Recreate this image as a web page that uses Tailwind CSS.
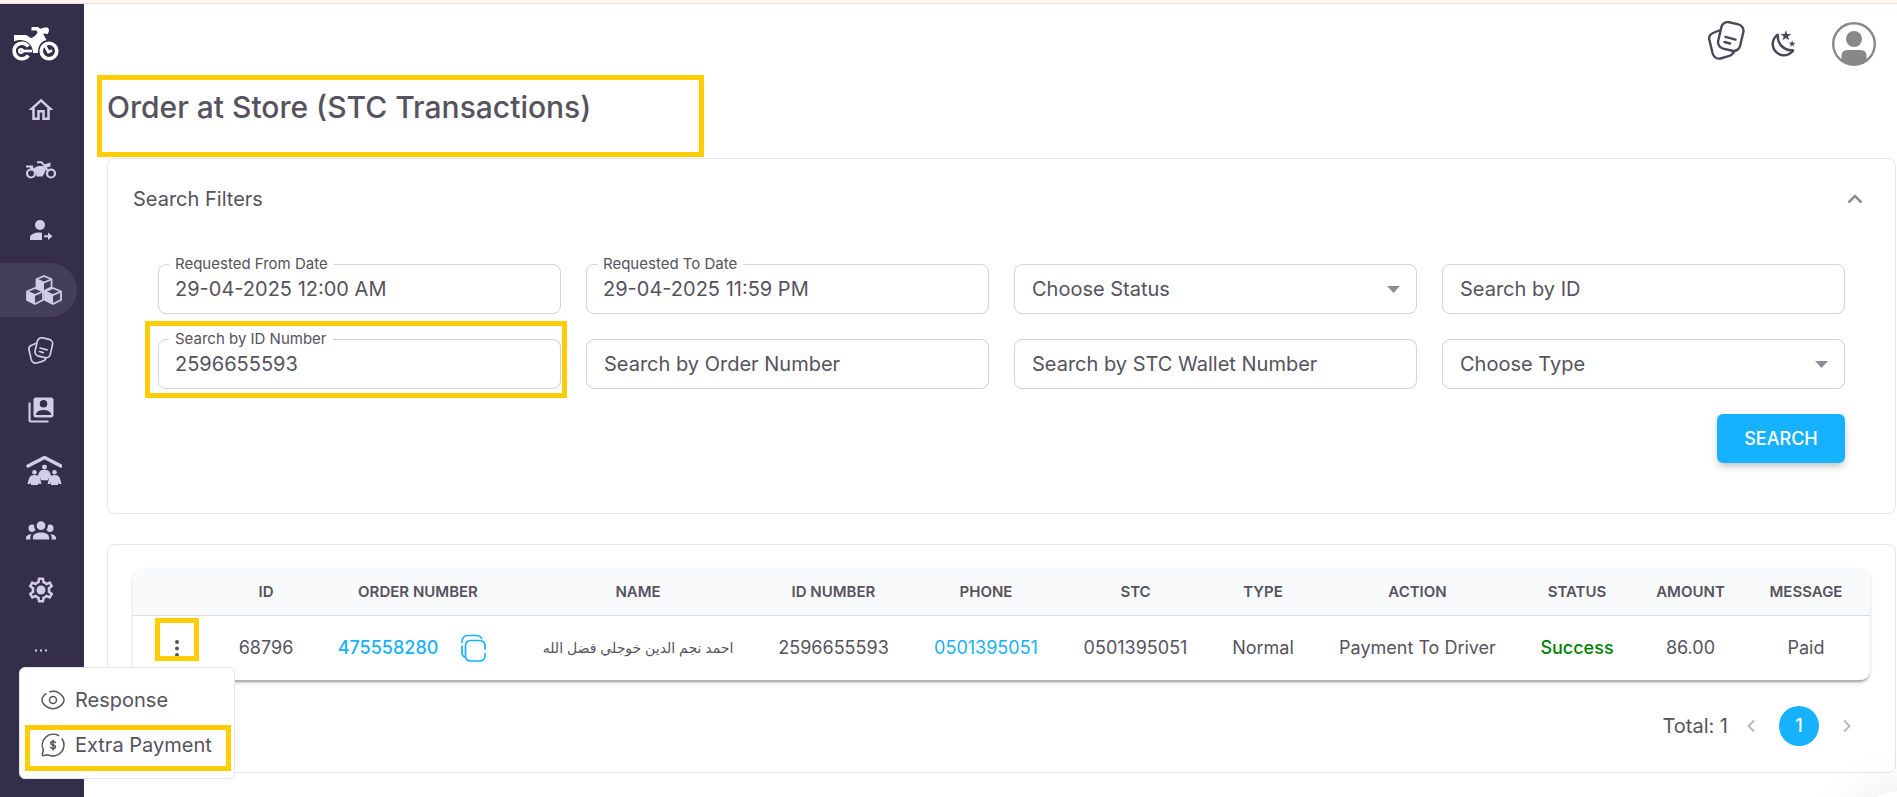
<!DOCTYPE html>
<html lang="en">
<head>
    <meta charset="UTF-8">
    <meta name="viewport" content="width=device-width, initial-scale=1.0">
    <title>Order at Store (STC Transactions)</title>
    <script src="https://cdn.jsdelivr.net/npm/@tailwindcss/browser@4"></script>
</head>
<body class="bg-white font-['Inter','DejaVu_Sans',sans-serif] text-[#56525e]">
    <svg class="hidden">
        <symbol id="icon-cards" viewBox="0 0 38 39">
            <g fill="none" stroke="currentColor" stroke-width="2.4" stroke-linecap="round" stroke-linejoin="round">
                <path d="M12 9.5L6 12Q1.500 14 2.300 18.500L5.500 32Q7.500 38.500 13.500 37.500L21.500 35.200Q25.500 34 27 30.800"/>
                <rect x="12.500" y="2" width="22.500" height="27" rx="6.500" transform="rotate(13 23.800 15.500)"/>
                <path d="M18.500 15.800L28.500 18.600M17.500 21L23 22.500"/>
            </g>
        </symbol>
        <symbol id="icon-cube" viewBox="0 0 18 18">
            <path d="M9 1L17 4.500V13L9 17L1 13V4.500Z" fill="none" stroke="currentColor" stroke-width="1.800" stroke-linejoin="round"/>
            <path d="M1 4.500L9 8V17L1 13Z" fill="currentColor"/>
            <path d="M1 4.500L9 8L17 4.500" fill="none" stroke="currentColor" stroke-width="1.800"/>
        </symbol>
        <symbol id="icon-person" viewBox="0 0 14 15">
            <circle cx="7" cy="2.300" r="2.300" fill="currentColor"/>
            <path d="M7 5C10 5 11.500 6 12.500 8.500L14 14H11.500L11 12.500L10.500 15H3.500L3 12.500L2.500 14H0L1.500 8.500C2.500 6 4 5 7 5Z" fill="currentColor"/>
        </symbol>
    </svg>

    <div class="relative flex min-h-screen flex-col overflow-hidden">
        <div class="h-1 border-b border-[#f5dbd3] bg-[#fdf5f2]"></div>

        <div class="flex flex-1">
            <!-- Sidebar -->
            <aside class="w-[84px] shrink-0 bg-[#342e4a] text-[#d1cde6]">
                <a href="#" aria-label="Home page" class="flex h-[79px] items-start pt-[23px] pl-[11px] text-white">
                    <svg class="h-[34px] w-12" viewBox="0 0 48 34" fill="none" stroke="currentColor">
                        <path d="M17.300 19.500A7.800 7.800 0 1 0 17.300 28.500" stroke-width="3.600"/>
                        <circle cx="10" cy="24" r="1.800" stroke-width="2.400"/>
                        <path d="M12 24H21" stroke-width="2.600"/>
                        <circle cx="38" cy="24" r="7.800" stroke-width="3.600"/>
                        <path d="M33.500 18L37.500 25L41 23.500" stroke-width="2.800"/>
                        <path d="M3 8H14.500C17 8 18 11 20.500 11C23 10 25.500 8 26.500 5.500L25.500 3.500H20.500V0H27L29.500 2C31 0.800 33 0.300 36.500 0.500C38.500 2 38.500 5 36.500 7L32 6.500L35.500 13C30 14.500 27 18.500 27 26H22C22 18.500 17 13.500 10 13C7 13 4.500 13.500 3 14.500Z" fill="currentColor" stroke="none"/>
                    </svg>
                </a>
                <nav class="flex flex-col gap-[6px]">
                    <a href="#" aria-label="Home" class="flex h-[54px] w-[77px] items-center rounded-r-full pl-[26px]">
                        <svg class="h-[30px] w-[30px]" viewBox="0 0 24 24" fill="currentColor"><path d="M12,5.690L17,10.190V18H15V12H9V18H7V10.190L12,5.690M12,3L2,12H5V20H11V14H13V20H19V12H22L12,3"/></svg>
                    </a>
                    <a href="#" aria-label="Drivers" class="flex h-[54px] w-[77px] items-center rounded-r-full pl-[26px]">
                        <svg class="h-[18px] w-[30px]" viewBox="0 0 30 18" fill="none" stroke="currentColor">
                            <circle cx="5" cy="12.500" r="4" stroke-width="2.200"/>
                            <circle cx="25" cy="12.500" r="4" stroke-width="2.200"/>
                            <path d="M0 5.500H7" stroke-width="2"/>
                            <path d="M11 1.200H15.500L18 4L22.500 11" stroke-width="2"/>
                            <path d="M4 5L8 7L12 5H17L20 7.500L19 11L16.500 15.500H10.500L10 12L7.500 8.500L4 7.500ZM18 3.500L24.500 1.500V5.500L19.500 7Z" fill="currentColor" stroke="none"/>
                        </svg>
                    </a>
                    <a href="#" aria-label="Assign driver" class="flex h-[54px] w-[77px] items-center rounded-r-full pl-[26px]">
                        <svg class="h-[30px] w-[30px]" viewBox="0 0 30 30" fill="currentColor">
                            <circle cx="14" cy="10" r="5"/>
                            <path d="M4 25V22.500C4 19.500 8.500 17.500 14 17.500L16 17.700V25ZM18 20.300H22V17.500L26.500 21.300L22 25V22.300H18Z"/>
                        </svg>
                    </a>
                    <a href="#" aria-label="Orders" class="flex h-[54px] w-[77px] items-center rounded-r-full bg-[#433e59] pl-[26px]">
                        <svg class="h-[30px] w-9" viewBox="0 0 36 30">
                            <use href="#icon-cube" x="9" y="0" width="18" height="17"/>
                            <use href="#icon-cube" x="0" y="12" width="18" height="18"/>
                            <use href="#icon-cube" x="18" y="12" width="18" height="18"/>
                        </svg>
                    </a>
                    <a href="#" aria-label="Tickets" class="flex h-[54px] w-[77px] items-center rounded-r-full pl-[27px]">
                        <svg class="h-[27px] w-[27px]"><use href="#icon-cards"/></svg>
                    </a>
                    <a href="#" aria-label="Contacts" class="flex h-[54px] w-[77px] items-center rounded-r-full pl-[26px]">
                        <svg class="h-[30px] w-[30px]" viewBox="0 0 24 24" fill="currentColor">
                            <path fill-rule="evenodd" d="M8 2H20A1.800 1.800 0 0 1 22 4V16A1.800 1.800 0 0 1 20 18H8A1.800 1.800 0 0 1 6 16V4A1.800 1.800 0 0 1 8 2ZM14 4A3 3 0 1 0 14 10A3 3 0 1 0 14 4ZM8 16H20V15C19 12.700 16.500 12 14 12C11.500 12 9 12.700 8 15Z"/>
                            <path d="M2 6H3.700V20.300H18V22H4A2 2 0 0 1 2 20Z"/>
                        </svg>
                    </a>
                    <a href="#" aria-label="Family" class="flex h-[54px] w-[77px] items-center rounded-r-full pl-[26px]">
                        <svg class="h-[30px] w-9" viewBox="0 0 36 30">
                            <path d="M2 11L18.500 2.500L35 11" fill="none" stroke="currentColor" stroke-width="3.600" stroke-linecap="round" stroke-linejoin="round"/>
                            <use href="#icon-person" x="11" y="9.500" width="15" height="16"/>
                            <use href="#icon-person" x="1" y="15" width="15" height="15"/>
                            <use href="#icon-person" x="21" y="15" width="15" height="15"/>
                        </svg>
                    </a>
                    <a href="#" aria-label="Groups" class="flex h-[54px] w-[77px] items-center rounded-r-full pl-[26px]">
                        <svg class="h-[30px] w-[30px]" viewBox="0 -1.500 24 24" fill="currentColor"><path d="M12,3.500A3.500,3.500 0 0,1 15.500,7A3.500,3.500 0 0,1 12,10.500A3.500,3.500 0 0,1 8.500,7A3.500,3.500 0 0,1 12,3.500M5,6C5.560,6 6.080,6.150 6.530,6.420C6.380,7.850 6.800,9.270 7.660,10.380C7.160,11.340 6.160,12 5,12A3,3 0 0,1 2,9A3,3 0 0,1 5,6M19,6A3,3 0 0,1 22,9A3,3 0 0,1 19,12C17.840,12 16.840,11.340 16.340,10.380C17.200,9.270 17.620,7.850 17.470,6.420C17.920,6.150 18.440,6 19,6M5.500,16.250C5.500,14.180 8.410,12.500 12,12.500C15.590,12.500 18.500,14.180 18.500,16.250V18H5.500V16.250M0,18V16.500C0,15.110 1.890,13.940 4.450,13.600C3.860,14.280 3.500,15.220 3.500,16.250V18H0M24,18H20.500V16.250C20.500,15.220 20.140,14.280 19.550,13.600C22.110,13.940 24,15.110 24,16.500V18Z"/></svg>
                    </a>
                    <a href="#" aria-label="Settings" class="flex h-[54px] w-[77px] items-center rounded-r-full pl-[26px]">
                        <svg class="h-[30px] w-[30px]" viewBox="0 0 24 24" fill="currentColor"><circle cx="12" cy="12" r="3.600"/><path d="M10,22C9.750,22 9.540,21.820 9.500,21.580L9.130,18.930C8.500,18.680 7.960,18.340 7.440,17.940L4.950,18.950C4.730,19.030 4.460,18.950 4.340,18.730L2.340,15.270C2.210,15.050 2.270,14.780 2.460,14.630L4.570,12.970L4.500,12L4.570,11L2.460,9.370C2.270,9.220 2.210,8.950 2.340,8.730L4.340,5.270C4.460,5.050 4.730,4.960 4.950,5.050L7.440,6.050C7.960,5.660 8.500,5.320 9.130,5.070L9.500,2.420C9.540,2.180 9.750,2 10,2H14C14.250,2 14.460,2.180 14.500,2.420L14.870,5.070C15.500,5.320 16.040,5.660 16.560,6.050L19.050,5.050C19.270,4.960 19.540,5.050 19.660,5.270L21.660,8.730C21.790,8.950 21.730,9.220 21.540,9.370L19.430,11L19.500,12L19.430,13L21.540,14.630C21.730,14.780 21.790,15.050 21.660,15.270L19.660,18.730C19.540,18.950 19.270,19.040 19.050,18.950L16.560,17.950C16.040,18.340 15.500,18.680 14.870,18.930L14.500,21.580C14.460,21.820 14.250,22 14,22H10M11.250,4L10.880,6.610C9.680,6.860 8.620,7.500 7.850,8.390L5.440,7.350L4.690,8.650L6.800,10.200C6.400,11.370 6.400,12.640 6.800,13.800L4.680,15.360L5.430,16.660L7.860,15.620C8.630,16.500 9.680,17.140 10.870,17.380L11.240,20H12.760L13.130,17.390C14.320,17.140 15.370,16.500 16.140,15.620L18.570,16.660L19.320,15.360L17.200,13.810C17.600,12.640 17.600,11.370 17.200,10.200L19.310,8.650L18.560,7.350L16.150,8.390C15.380,7.500 14.320,6.860 13.120,6.620L12.750,4H11.250Z"/></svg>
                    </a>
                    <a href="#" aria-label="More" class="flex h-[54px] w-[77px] items-center rounded-r-full pl-[34px]">
                        <svg class="h-[3px] w-[14px]" viewBox="0 0 14 3" fill="currentColor"><path d="M1 0.500H3V2.500H1ZM6 0.500H8V2.500H6ZM11 0.500H13V2.500H11Z"/></svg>
                    </a>
                </nav>
            </aside>

            <div class="flex min-w-0 flex-1 flex-col pr-px pl-[23px]">
                <!-- Header -->
                <header class="flex h-[71px] items-start justify-end pt-[17px] pr-5">
                    <button type="button" aria-label="Tickets" class="mr-6"><svg class="h-[39px] w-[38px] text-[#4c4758]"><use href="#icon-cards"/></svg></button>
                    <button type="button" aria-label="Toggle dark mode" class="mt-2 mr-[33px]"><svg class="h-[30px] w-[30px] text-[#4c4758]" viewBox="0 0 24 24" fill="currentColor"><path d="M17.750,4.090L15.220,6.030L16.130,9.090L13.500,7.280L10.870,9.090L11.780,6.030L9.250,4.090L12.440,4L13.500,1L14.560,4L17.750,4.090M21.250,11L19.610,12.250L20.200,14.230L18.500,13.060L16.800,14.230L17.390,12.250L15.750,11L17.810,10.950L18.500,9L19.190,10.950L21.250,11M18.970,15.950C19.800,15.870 20.690,17.050 20.160,17.800C19.840,18.250 19.500,18.670 19.080,19.070C15.170,23 8.840,23 4.940,19.070C1.030,15.170 1.030,8.830 4.940,4.930C5.340,4.530 5.760,4.170 6.210,3.850C6.960,3.320 8.140,4.210 8.060,5.040C7.790,7.900 8.750,10.870 10.950,13.060C13.140,15.260 16.100,16.220 18.970,15.950M17.330,17.970C14.500,17.810 11.700,16.640 9.530,14.500C7.360,12.310 6.200,9.500 6.040,6.680C3.230,9.820 3.340,14.640 6.350,17.660C9.370,20.670 14.190,20.780 17.330,17.970Z"/></svg></button>
                    <button type="button" aria-label="Account"><svg class="mt-px h-11 w-11 text-[#888]" viewBox="0 0 44 44" fill="currentColor">
                        <circle cx="22" cy="22" r="20.800" fill="none" stroke="currentColor" stroke-width="2.400"/>
                        <circle cx="22" cy="17" r="8"/>
                        <path d="M9.500 38V34Q9.500 28 15.500 28H28.500Q34.500 28 34.500 34V38Q29 43 22 43Q15 43 9.500 38Z"/>
                    </svg></button>
                </header>

                <!-- Page title -->
                <div class="relative h-[83px] pt-3">
                    <h1 class="text-[30px] leading-10 font-medium">Order at Store (STC Transactions)</h1>
                    <div class="pointer-events-none absolute top-0 -left-[10px] h-[82px] w-[607px] border-[5px] border-[#ffcd05]"></div>
                </div>

                <!-- Search filters -->
                <section class="rounded-[8px] border border-[#e6e6e9] px-[25px]">
                    <button type="button" class="flex h-20 w-full items-center justify-between pr-[7px] text-xl">
                        Search Filters
                        <svg class="h-4 w-4" viewBox="0 0 16 16" fill="none" stroke="#8f8b95" stroke-width="2.500"><path d="M1.500 11.500L8 5L14.500 11.500"/></svg>
                    </button>
                    <form class="px-[25px] pt-[25px] pb-[50px] text-xl" onsubmit="return false">
                        <div class="grid grid-cols-4 gap-[25px]">
                            <div class="relative">
                                <label for="from-date" class="absolute -top-[10px] left-[11px] bg-white px-[6px] text-[15px] leading-5">Requested From Date</label>
                                <input id="from-date" type="text" value="29-04-2025 12:00 AM" class="h-[50px] w-full rounded-[8px] border border-[#d3d2d6] px-4">
                            </div>
                            <div class="relative">
                                <label for="to-date" class="absolute -top-[10px] left-[11px] bg-white px-[6px] text-[15px] leading-5">Requested To Date</label>
                                <input id="to-date" type="text" value="29-04-2025 11:59 PM" class="h-[50px] w-full rounded-[8px] border border-[#d3d2d6] px-4">
                            </div>
                            <div class="relative">
                                <select aria-label="Choose Status" class="h-[50px] w-full appearance-none rounded-[8px] border border-[#d3d2d6] px-[17px]">
                                    <option>Choose Status</option>
                                </select>
                                <svg class="pointer-events-none absolute top-[22px] right-[17px] h-[7px] w-[13px]" viewBox="0 0 13 7"><path d="M0 0H13L6.500 7Z" fill="#8f8b95"/></svg>
                            </div>
                            <input type="text" aria-label="Search by ID" placeholder="Search by ID" class="h-[50px] w-full rounded-[8px] border border-[#d3d2d6] px-[17px] placeholder:text-[#56525e]">
                            <div class="relative">
                                <label for="id-number" class="absolute -top-[10px] left-[11px] bg-white px-[6px] text-[15px] leading-5">Search by ID Number</label>
                                <input id="id-number" type="text" value="2596655593" class="h-[50px] w-full rounded-[8px] border border-[#d3d2d6] px-4">
                                <div class="pointer-events-none absolute -top-[18px] -right-[6px] -bottom-[9px] -left-[13px] border-[5px] border-[#ffcd05]"></div>
                            </div>
                            <input type="text" aria-label="Search by Order Number" placeholder="Search by Order Number" class="h-[50px] w-full rounded-[8px] border border-[#d3d2d6] px-[17px] placeholder:text-[#56525e]">
                            <input type="text" aria-label="Search by STC Wallet Number" placeholder="Search by STC Wallet Number" class="h-[50px] w-full rounded-[8px] border border-[#d3d2d6] px-[17px] placeholder:text-[#56525e]">
                            <div class="relative">
                                <select aria-label="Choose Type" class="h-[50px] w-full appearance-none rounded-[8px] border border-[#d3d2d6] px-[17px]">
                                    <option>Choose Type</option>
                                </select>
                                <svg class="pointer-events-none absolute top-[22px] right-[17px] h-[7px] w-[13px]" viewBox="0 0 13 7"><path d="M0 0H13L6.500 7Z" fill="#8f8b95"/></svg>
                            </div>
                        </div>
                        <div class="mt-[25px] flex justify-end">
                            <button type="submit" class="h-[49px] w-32 rounded-[6px] bg-[#16b1ff] text-lg font-medium text-white shadow-[0_4px_8px_-2px_rgba(58,53,65,0.4)]">SEARCH</button>
                        </div>
                    </form>
                </section>

                <!-- Transactions -->
                <section class="mt-[30px] rounded-[8px] border border-[#e6e6e9] px-[25px] pt-6 pb-[26px]">
                    <div class="overflow-hidden rounded-[10px] border-b-2 border-[#b4b2b9] shadow-[0_1px_3px_rgba(58,53,65,0.25)]">
                        <table class="w-full table-fixed text-center">
                            <colgroup>
                                <col class="w-[83px]">
                                <col class="w-[100px]">
                                <col class="w-[204px]">
                                <col class="w-[236px]">
                                <col class="w-[155px]">
                                <col class="w-[150px]">
                                <col class="w-[149px]">
                                <col class="w-[106px]">
                                <col class="w-[203px]">
                                <col class="w-[116px]">
                                <col class="w-[111px]">
                                <col class="w-[124px]">
                            </colgroup>
                            <thead>
                                <tr class="h-[46px] border-b border-[#dddde0] bg-[#f9fafc] text-[15px]">
                                    <th></th>
                                    <th class="font-semibold">ID</th>
                                    <th class="font-semibold">ORDER NUMBER</th>
                                    <th class="font-semibold">NAME</th>
                                    <th class="font-semibold">ID NUMBER</th>
                                    <th class="font-semibold">PHONE</th>
                                    <th class="font-semibold">STC</th>
                                    <th class="font-semibold">TYPE</th>
                                    <th class="font-semibold">ACTION</th>
                                    <th class="font-semibold">STATUS</th>
                                    <th class="font-semibold">AMOUNT</th>
                                    <th class="pr-1 font-semibold">MESSAGE</th>
                                </tr>
                            </thead>
                            <tbody>
                                <tr class="h-[65px] text-[18px]">
                                    <td>
                                        <div class="relative ml-[22px] h-[53px] w-11">
                                            <button type="button" aria-label="Row actions" class="flex h-full w-full items-center justify-center"><svg class="h-[18px] w-1" viewBox="0 0 4 18" fill="currentColor"><circle cx="2" cy="3" r="2"/><circle cx="2" cy="9.500" r="2"/><circle cx="2" cy="16" r="2"/></svg></button>
                                            <div class="pointer-events-none absolute -top-[3px] left-0 h-[43px] w-11 border-[5px] border-[#ffcd05]"></div>
                                        </div>
                                    </td>
                                    <td>68796</td>
                                    <td>
                                        <div class="flex items-center justify-center gap-[23px] pr-3">
                                            <a href="#" class="font-medium text-[#16b1ff]">475558280</a>
                                            <button type="button" aria-label="Copy order number"><svg class="h-7 w-[25px]" viewBox="0 0 25 28" fill="none" stroke="#16b1ff" stroke-width="1.700" stroke-linecap="round">
                                                <path d="M24 15V12Q24 6.500 18.500 6.500H9.500Q4.500 6.500 4.500 12V21.500Q4.500 27 9.500 27H18.500Q24 27 24 21.500V19.500"/>
                                                <path d="M1 8.500Q1 1.500 7 1.500H15Q19.500 1.500 20.500 4.500M1 12V18.500Q1 22 3.500 23"/>
                                            </svg></button>
                                        </div>
                                    </td>
                                    <td lang="ar" dir="rtl" class="text-sm">احمد نجم الدين خوجلي فضل الله</td>
                                    <td>2596655593</td>
                                    <td><a href="#" class="text-[#16b1ff]">0501395051</a></td>
                                    <td>0501395051</td>
                                    <td>Normal</td>
                                    <td>Payment To Driver</td>
                                    <td class="font-medium text-[#008000]">Success</td>
                                    <td>86.00</td>
                                    <td class="pr-1">Paid</td>
                                </tr>
                            </tbody>
                        </table>
                    </div>

                    <!-- Pagination -->
                    <div class="mt-6 flex h-10 items-center justify-end pr-[17px]">
                        <span class="mr-[17px] text-xl">Total: 1</span>
                        <button type="button" aria-label="Previous page"><svg class="h-3 w-3" viewBox="0 0 12 12" fill="none" stroke="#bbb9bf" stroke-width="2"><path d="M9 0.500L3.500 6L9 11.500"/></svg></button>
                        <button type="button" class="mx-[22px] h-10 w-10 rounded-full bg-[#16b1ff] text-lg font-medium text-white">1</button>
                        <button type="button" aria-label="Next page"><svg class="h-3 w-3" viewBox="0 0 12 12" fill="none" stroke="#bbb9bf" stroke-width="2"><path d="M3 0.500L8.500 6L3 11.500"/></svg></button>
                    </div>
                </section>
            </div>
        </div>

        <!-- Row actions menu -->
        <div class="absolute top-[667px] left-[19px] flex h-[112px] w-[216px] flex-col rounded-[6px] border border-[#e6e6e9] bg-white pt-[9px] text-xl">
            <button type="button" class="flex h-[45px] items-center gap-[10px] pl-[21px]">
                <svg class="h-6 w-6" viewBox="0 0 24 24" fill="none" stroke="currentColor" stroke-width="1.500" stroke-linecap="round">
                    <path d="M9 3.700A12 12 0 0 1 12 3.300C17.500 3.300 20.300 6.500 21.900 8.700C23.300 10.800 23.300 13.200 21.900 15.300C20.300 17.500 17.500 20.700 12 20.700S3.700 17.500 2.100 15.300C0.700 13.200 0.700 10.800 2.100 8.700Q3.200 7 5 5.700"/>
                    <circle cx="12" cy="12" r="3.500"/>
                </svg>
                Response
            </button>
            <button type="button" class="flex h-[45px] items-center gap-[10px] pl-[21px]">
                <svg class="h-6 w-6" viewBox="0 0 24 24" fill="none" stroke="currentColor" stroke-width="1.500" stroke-linecap="round" stroke-linejoin="round">
                    <path d="M17.500 2.500A11 11 0 0 0 2.400 17L1.300 21.300Q1.200 22.900 2.800 22.600L7 21.800A11 11 0 0 0 21.200 6"/>
                    <path d="M14.300 9.700Q13.700 8.500 12 8.500Q9.700 8.500 9.700 10.200Q9.700 11.600 12 12Q14.400 12.400 14.400 13.900Q14.400 15.600 12 15.600Q10.200 15.600 9.600 14.300M12 7.300V16.900"/>
                </svg>
                Extra Payment
            </button>
            <div class="pointer-events-none absolute top-[57px] left-[5px] h-[46px] w-[206px] border-[5px] border-[#ffcd05]"></div>
        </div>

        <!-- Floating button, mostly below the fold -->
        <div class="absolute -right-[55px] -bottom-[98px] h-[104px] w-[104px] rounded-full bg-white shadow-[0_0_50px_rgba(0,0,0,0.1)]"></div>
    </div>
</body>
</html>
